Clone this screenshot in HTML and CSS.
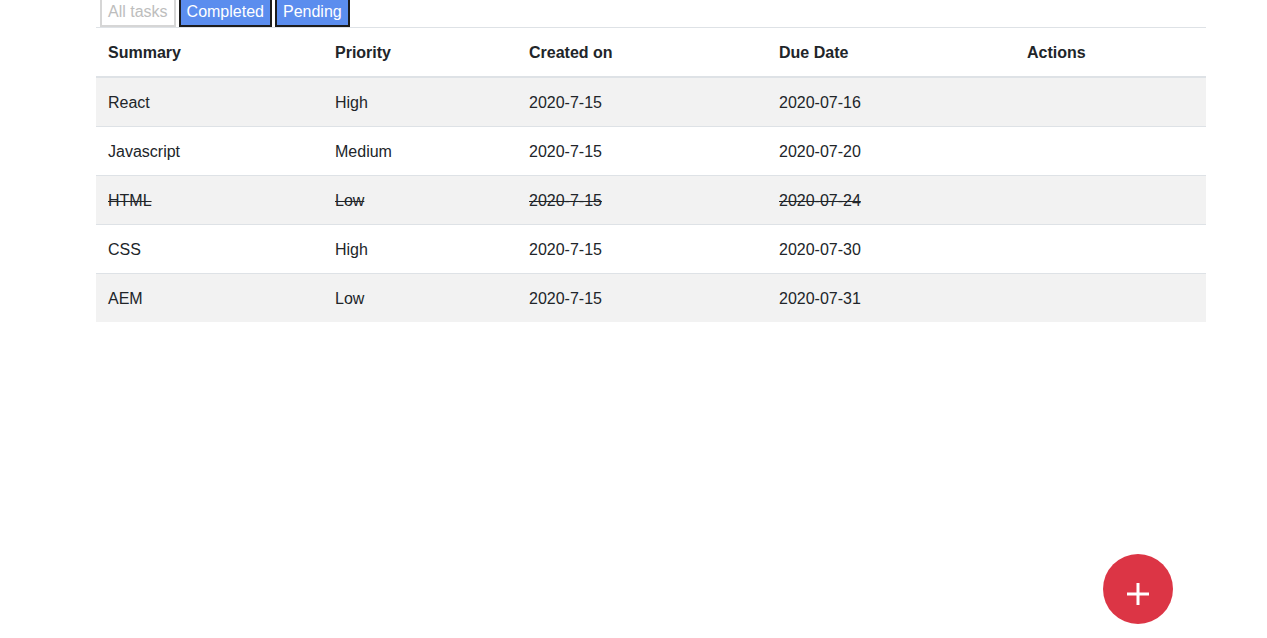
FILE: index.html
```html
<!DOCTYPE html>
<html>
<head>
<meta charset="utf-8">
<link rel="stylesheet" href="styles.css">
</head>
<body>
<div class="container">
  <div class="filters">
    <button class="btn btn-all">All tasks</button>
    <button class="btn btn-active">Completed</button>
    <button class="btn btn-active">Pending</button>
  </div>
  <table class="table">
    <colgroup>
      <col class="c1"><col class="c2"><col class="c3"><col class="c4"><col class="c5">
    </colgroup>
    <thead>
      <tr><th>Summary</th><th>Priority</th><th>Created on</th><th>Due Date</th><th>Actions</th></tr>
    </thead>
    <tbody>
      <tr><td>React</td><td>High</td><td>2020-7-15</td><td>2020-07-16</td><td></td></tr>
      <tr><td>Javascript</td><td>Medium</td><td>2020-7-15</td><td>2020-07-20</td><td></td></tr>
      <tr class="done"><td>HTML</td><td>Low</td><td>2020-7-15</td><td>2020-07-24</td><td></td></tr>
      <tr><td>CSS</td><td>High</td><td>2020-7-15</td><td>2020-07-30</td><td></td></tr>
      <tr><td>AEM</td><td>Low</td><td>2020-7-15</td><td>2020-07-31</td><td></td></tr>
    </tbody>
  </table>
</div>
<button class="fab" aria-label="Add task">
  <svg width="24" height="24" viewBox="0 0 24 24"><path d="M12 1v22M1 12h22" stroke="#fff" stroke-width="3" fill="none"/></svg>
</button>
</body>
</html>
```
FILE: styles.css
```css
html, body {
  margin: 0;
  padding: 0;
  background: #fff;
}
body {
  font-family: "Segoe UI", "Liberation Sans", Arial, sans-serif;
  font-size: 16px;
  line-height: 1.5;
  color: #212529;
  overflow: hidden;
  height: 638px;
}
.container {
  width: 1110px;
  margin-left: 96px;
}
.filters {
  display: flex;
  gap: 3px;
  padding-left: 4px;
  margin-top: -3px;
  height: 30px;
}
.btn {
  font-family: inherit;
  font-size: 16px;
  line-height: 24px;
  padding: 1px 6px 1px 6px;
  margin: 0;
  height: 30px;
  border-width: 2px;
  border-style: solid;
  cursor: pointer;
}
.btn-all {
  background: #fff;
  color: #bdbdbd;
  border-color: #d6d6d6;
}
.btn-active {
  background: #5b8dee;
  color: #fff;
  border-color: #1c1c1c;
}
.table {
  width: 1110px;
  border-collapse: collapse;
  table-layout: fixed;
}
.c1 { width: 227px; }
.c2 { width: 194px; }
.c3 { width: 250px; }
.c4 { width: 248px; }
.c5 { width: 191px; }
.table th, .table td {
  padding: 13px 12px 11px;
  text-align: left;
  vertical-align: top;
  border-top: 1px solid #dee2e6;
  line-height: 24px;
  height: 24px;
}
.table th {
  font-weight: 700;
  border-bottom: 2px solid #dee2e6;
}
.table tbody tr:nth-child(odd) {
  background: #f2f2f2;
}
.table tbody tr:first-child td {
  border-top: 0;
}
.done td {
  text-decoration: line-through;
}
.fab {
  position: fixed;
  left: 1103px;
  top: 554px;
  width: 70px;
  height: 70px;
  border-radius: 50%;
  border: 0;
  padding: 0;
  background: #dc3545;
  display: flex;
  align-items: center;
  justify-content: center;
  padding-top: 10px;
}
```
